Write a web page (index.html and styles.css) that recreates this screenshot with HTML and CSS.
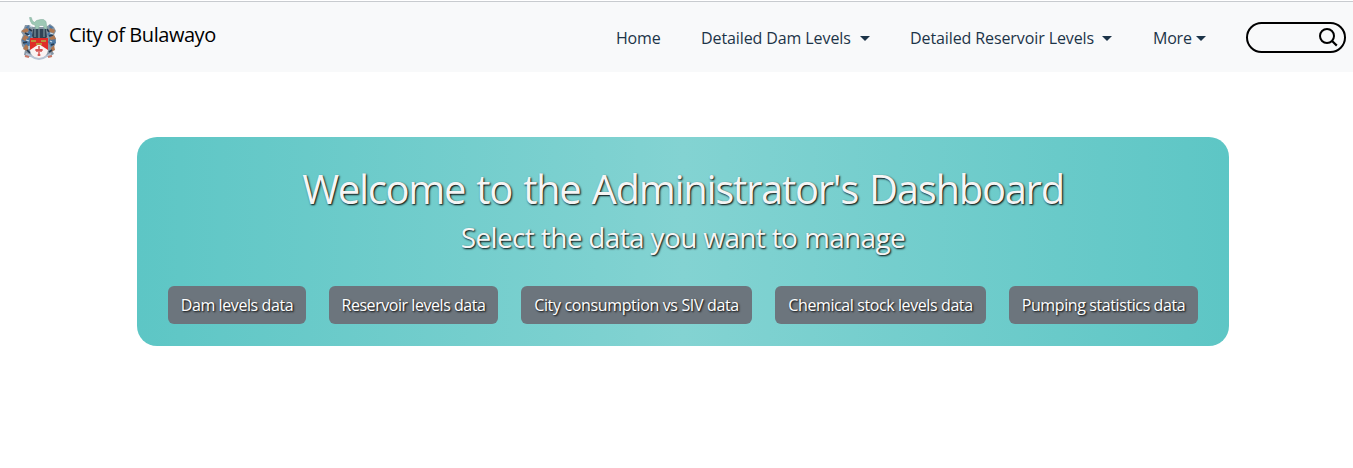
FILE: index.html
```html
<!DOCTYPE html>
<html lang="en">
<head>
<meta charset="utf-8">
<title>City of Bulawayo</title>
<link rel="stylesheet" href="styles.css">
</head>
<body>
<header class="navbar">
  <a class="brand">
    <svg class="crest" viewBox="0 0 36 46" aria-hidden="true">
      <path d="M8 10l-4 0-1 3-3 4 2 3-2 5 1 6 3 4-1 5 6 2 18 0 6-3-2-4 3-5 1-6-2-4 2-4-2-4-4-3-4 3H12z" fill="#8796a4"/>
      <path d="M8 10l-4 3 5 2 3 5-3 4 1 3-3 5-4-2-2-5 2-4 4-3M28 10l4 2-2 4-4 3 3 4-2 4 3 5 5-4-1-6-4-3" fill="#4c78a3"/>
      <path d="M0 16l6-3 2 3-4 2M1 24l3-4 4 2-4 4M2 34l3-5 3 3-2 4M29 13l5 2-1 3-5-1M28 23l5-3 2 4-5 1M30 33l3-3 1 5-4 2" fill="#b07750"/>
      <path d="M4 18l4 2M2 28l4-1M28 21l4-1M30 30l3-1M8 14l3 2M26 14l2 3M6 35l3 3M28 37l3-2" stroke="#293c50" stroke-width="1.7"/>
      <path d="M9 11l2 1M7 21l2-1M5 25l3 1M29 18l3 1M29 26l2 1M8 31v3" stroke="#c9dce9" stroke-width="1.3"/>
      <path d="M8.500 2.500h1.800l1.200 3.500 2 1.300 2-1.800 4-1h3l2.500 2 1 7.500h-2.800l-.7-3.500h-4l-1.200 3.500h-2.800l-.5-4-3-1-1.700-3z" fill="#9dc8b5" stroke="#7eaa99" stroke-width=".5"/>
      <path d="M12 14h13l1 8-3 3H13l-2-4z" fill="#304356"/>
      <path d="M14 14v8M18 14v9M23 13v9" stroke="#839aa3" stroke-width="1.1"/>
      <path d="M9 23h18v11c0 6-4 9-9 10-5-1-9-4-9-10z" fill="#faf2f2"/>
      <path d="M9 23h18v12l-9-6-9 6z" fill="#e02b28"/>
      <path d="M10 25h5v2h-5zM20 25h5v2h-5zM15 28h6v2h-6z" fill="#bd9139"/>
      <path d="M18 31v10M14 35h8M16 34v3M20 34v3M16.500 40h3" stroke="#cc302f" stroke-width="1.2"/>
      <path d="M5 39l5 2q8 6 16 0l4-2" fill="none" stroke="#b8c4d5" stroke-width="2"/>
      <path d="M4 41l4 1M27 42l4-1" stroke="#c87766" stroke-width="2"/>
    </svg>
    <span class="brand-name">City of Bulawayo</span>
  </a>
  <nav class="menu">
    <a class="link home">Home</a>
    <a class="link dams"><span>Detailed Dam Levels</span><i class="caret"></i></a>
    <a class="link reservoirs"><span>Detailed Reservoir Levels</span><i class="caret"></i></a>
    <a class="link more"><span>More</span><i class="caret"></i></a>
  </nav>
  <div class="search">
    <svg class="search-icon" viewBox="0 0 20 20" aria-hidden="true"><circle cx="9" cy="8" r="7" fill="none" stroke="#000" stroke-width="2"/><path d="M13.800 12.800l5 4.800" stroke="#000" stroke-width="2.2"/></svg>
  </div>
</header>
<main class="panel">
  <h1 class="title">Welcome to the Administrator's Dashboard</h1>
  <h2 class="subtitle">Select the data you want to manage</h2>
  <div class="actions">
    <button class="btn dam-btn">Dam levels data</button>
    <button class="btn res-btn">Reservoir levels data</button>
    <button class="btn city-btn">City consumption vs SIV data</button>
    <button class="btn chem-btn">Chemical stock levels data</button>
    <button class="btn pump-btn">Pumping statistics data</button>
  </div>
</main>
</body>
</html>
```
FILE: styles.css
```css
* { box-sizing: border-box; }
body { margin: 0; background: #fff; font-family: "Open Sans", "Noto Sans", sans-serif; font-size: 16px; }
.navbar { display: flex; height: 71px; margin-top: 1px; border-top: 1px solid #c8cbcf; background: #f8f9fa; white-space: nowrap; }
.brand { display: flex; width: 616px; padding-left: 21px; color: #000; }
.crest { width: 36px; height: 46px; margin-top: 13px; }
.brand-name { margin: 18px 0 0 12px; font-size: 20px; line-height: 30px; letter-spacing: -0.45px; }
.menu { display: flex; align-items: flex-start; width: 630px; padding-top: 24px; color: #1c3448; line-height: 24px; letter-spacing: -0.1px; }
.link { display: flex; align-items: center; justify-content: space-between; }
.home { width: 45px; margin-right: 40px; letter-spacing: -0.2px; }
.dams { width: 169px; margin-right: 40px; }
.reservoirs { width: 202px; margin-right: 41px; }
.more { width: 53px; letter-spacing: -0.2px; }
.caret { width: 0; height: 0; border: 5px solid transparent; border-top-color: #1c3448; border-bottom: 0; }
.search { width: 100px; height: 31px; margin-top: 20px; padding: 4px 6px; border: 2px solid #000; border-radius: 16px; display: flex; justify-content: flex-end; }
.search-icon { width: 20px; height: 20px; }
.panel { width: 1092px; height: 209px; margin: 65px 0 0 137px; padding: 28px 31px 22px; border-radius: 20px; background: linear-gradient(90deg, #5dc6c5, #83d3d2 50%, #5dc6c5); color: #f5f5f5; text-align: center; text-shadow: 1px 1px 2px #000; white-space: nowrap; }
.title { margin: 0; font-size: 40px; font-weight: 400; line-height: 48px; letter-spacing: -1.3px; word-spacing: 2px; }
.subtitle { margin: 7px 0 31px; font-size: 28px; font-weight: 400; line-height: 35px; letter-spacing: -0.65px; }
.actions { display: flex; justify-content: space-between; }
.btn { height: 38px; padding: 0; border: 0; border-radius: 6px; background: #6c757d; color: #fff; font: 16px "Open Sans", "Noto Sans", sans-serif; letter-spacing: -0.4px; text-shadow: 1px 1px 2px #000; }
.dam-btn { width: 138px; }
.res-btn { width: 169px; letter-spacing: -0.45px; }
.city-btn { width: 231px; letter-spacing: -0.35px; }
.chem-btn { width: 211px; }
.pump-btn { width: 189px; }
```
